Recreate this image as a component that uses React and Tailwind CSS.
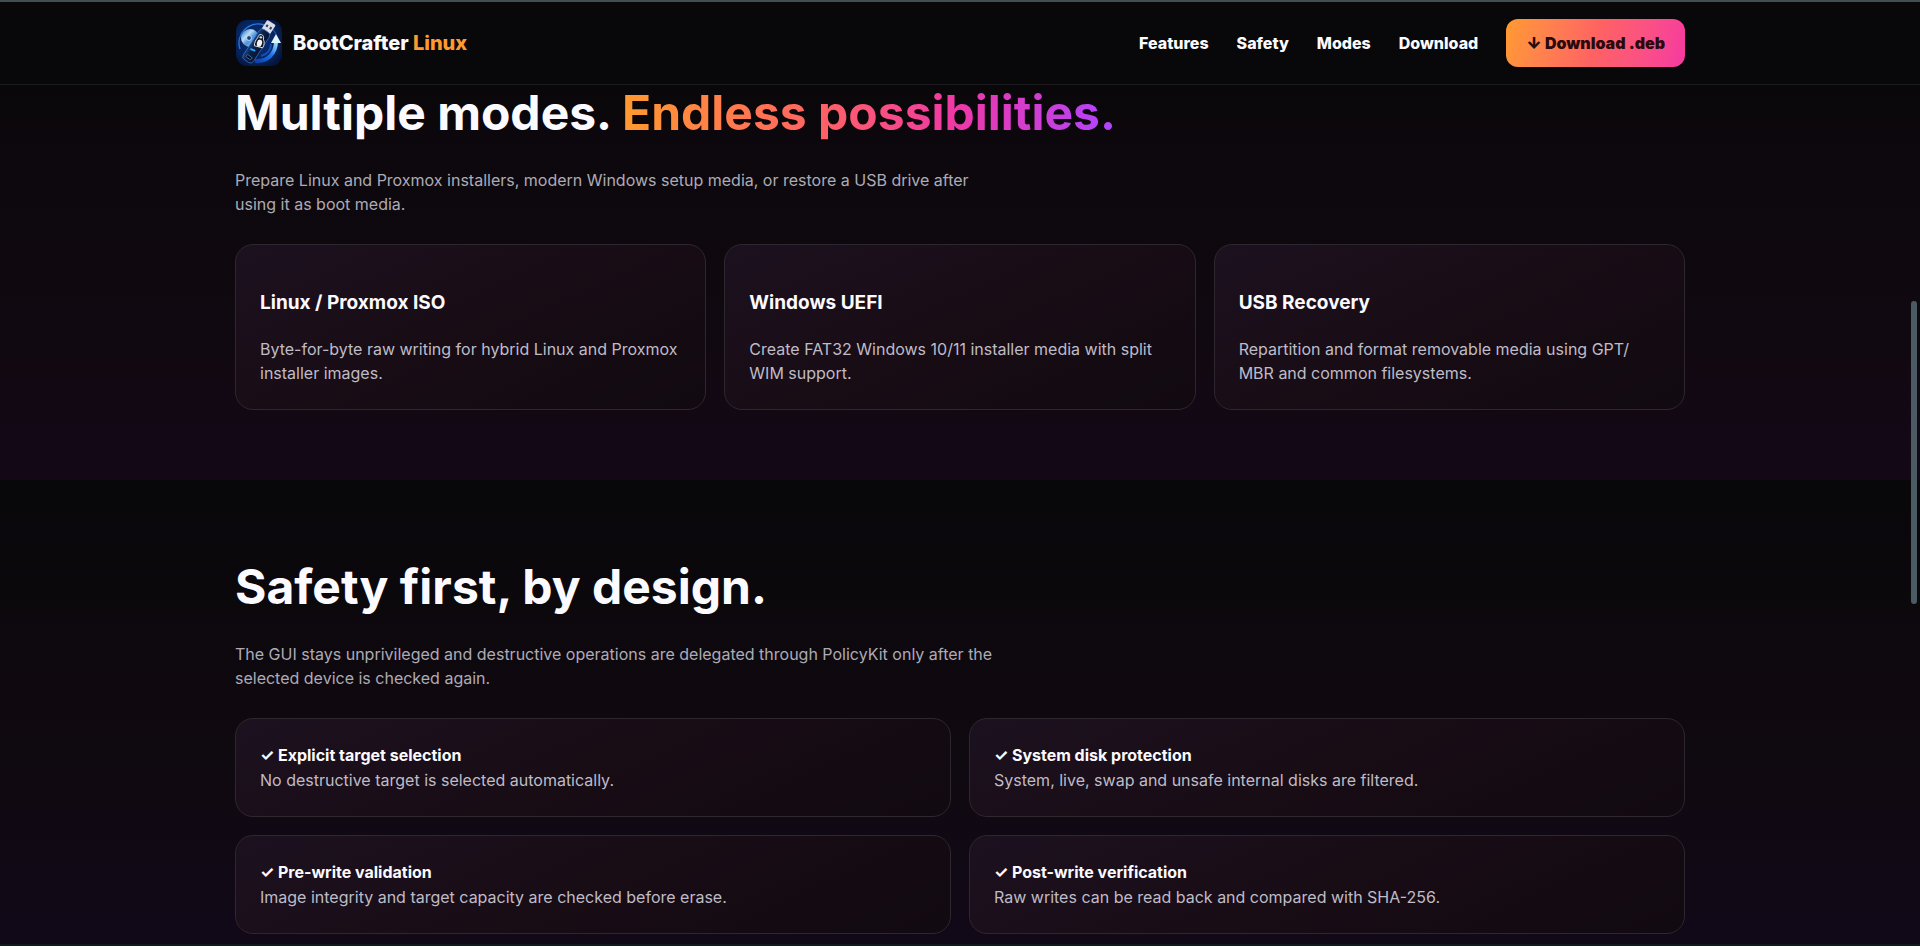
const NAV = ["Features", "Safety", "Modes", "Download"];

const MODES = [
  { title: "Linux / Proxmox ISO", text: "Byte-for-byte raw writing for hybrid Linux and Proxmox installer images." },
  { title: "Windows UEFI", text: "Create FAT32 Windows 10/11 installer media with split WIM support." },
  // zero-width space lets the line break after the slash
  { title: "USB Recovery", text: "Repartition and format removable media using GPT/\u200bMBR and common filesystems." },
];

const CHECKS = [
  { title: "Explicit target selection", text: "No destructive target is selected automatically." },
  { title: "System disk protection", text: "System, live, swap and unsafe internal disks are filtered." },
  { title: "Pre-write validation", text: "Image integrity and target capacity are checked before erase." },
  { title: "Post-write verification", text: "Raw writes can be read back and compared with SHA-256." },
];

function Logo() {
  return (
    <svg viewBox="0 0 48 48" className="size-12 shrink-0" aria-hidden="true">
      <defs>
        <radialGradient id="tile" cx="0.45" cy="0.45" r="0.65">
          <stop offset="0" stopColor="#0a2f7c" />
          <stop offset="0.7" stopColor="#07235c" />
          <stop offset="1" stopColor="#041338" />
        </radialGradient>
        <linearGradient id="arc" x1="0" y1="1" x2="1" y2="0">
          <stop offset="0" stopColor="#0b3fa8" />
          <stop offset="0.55" stopColor="#1b74ea" />
          <stop offset="1" stopColor="#a8e8ff" />
        </linearGradient>
        <linearGradient id="disc" x1="0" y1="0" x2="1" y2="1">
          <stop offset="0" stopColor="#1f62b4" />
          <stop offset="0.35" stopColor="#b9dcf6" />
          <stop offset="0.55" stopColor="#4f93d8" />
          <stop offset="1" stopColor="#c8e4fa" />
        </linearGradient>
        <linearGradient id="stick" x1="0" y1="0" x2="1" y2="0">
          <stop offset="0" stopColor="#16407e" />
          <stop offset="0.4" stopColor="#0a2049" />
          <stop offset="1" stopColor="#071532" />
        </linearGradient>
      </defs>
      <rect x="1" y="1" width="46" height="46" rx="11" fill="url(#tile)" />
      <path d="M5 30A19 19 0 0 1 29 6" fill="none" stroke="#2479dc" strokeWidth="1.4" />
      <path d="M31 6A19 19 0 0 1 41 15" fill="none" stroke="#1654ae" strokeWidth="1.2" />
      <circle cx="15" cy="19" r="9" fill="url(#disc)" />
      <circle cx="14" cy="19" r="2.4" fill="#103d82" stroke="#e2f2ff" strokeWidth="0.8" />
      <path d="M20 42C32 43 41 35 41 22" fill="none" stroke="url(#arc)" strokeWidth="4" />
      <path d="M26 37C33 35 36 30 36 25" fill="none" stroke="#1450b4" strokeWidth="2" />
      <path d="M41 15L46 24H36Z" fill="#dcf5ff" />
      <g transform="rotate(33 22 25)">
        <rect x="17.500" y="-1" width="10" height="11" rx="1.2" fill="#d9dee8" />
        <rect x="19.500" y="3" width="2" height="2.6" fill="#333b4a" />
        <rect x="23.900" y="3" width="2" height="2.6" fill="#333b4a" />
        <rect x="16.500" y="9" width="12" height="36" rx="3.6" fill="url(#stick)" stroke="#3c73c2" strokeWidth="0.7" />
        <rect x="19.500" y="39" width="6" height="2.8" rx="1.2" fill="#040b1c" stroke="#5f92d6" strokeWidth="0.6" />
      </g>
      <rect x="15" y="30" width="5.5" height="2" rx="0.8" fill="#24a8ff" transform="rotate(22 18 31)" />
      {/* Penguin */}
      <g transform="rotate(14 25 23)">
        <path d="M24.500 15.500C27 15.500 27.600 17.500 27.600 19.500C29.500 21.500 30 25 29 28L20.500 28C19.600 25 20.500 21.500 21.800 19.500C21.800 17.500 22.300 15.500 24.500 15.500Z" fill="#0b101c" stroke="#dfe6ef" strokeWidth="0.9" />
        <ellipse cx="24.800" cy="24.300" rx="2.600" ry="3.600" fill="#eef2f7" />
        <ellipse cx="24.700" cy="18.300" rx="1.500" ry="1.100" fill="#d7dde6" />
      </g>
    </svg>
  );
}

function Card({ children }) {
  return (
    <article className="rounded-[18px] border border-[#2c282d] bg-linear-155 from-[#1c111f] via-[#180c15] to-[#110a10] p-6">
      {children}
    </article>
  );
}

export default function App() {
  return (
    <div className="flex min-h-screen flex-col border-t-2 border-b-2 border-t-[#414f53] border-b-[#131a1e] bg-[#08070a] text-base text-[#fbfaff] font-['Inter',sans-serif]">
      {/* Header */}
      <header className="border-b border-[#1c1a1d] bg-[#080709]">
        <div className="mx-auto flex h-[82px] max-w-[1450px] items-center justify-between">
          <a href="#top" className="flex items-center gap-2.5 text-xl font-extrabold">
            <Logo />
            <span>BootCrafter <span className="text-[#ff9a2f]">Linux</span></span>
          </a>
          <nav className="flex items-center gap-7 font-extrabold">
            {NAV.map(item => <a key={item} href={`#${item.toLowerCase()}`}>{item}</a>)}
            <a href="#deb" className="rounded-xl bg-linear-105 from-[#ff9a2f] via-[#ff6262] to-[#f638a0] px-5 py-3 font-black text-[#2a0a0c]">
              ↓ Download .deb
            </a>
          </nav>
        </div>
      </header>

      {/* Modes */}
      <section id="modes" className="bg-linear-to-b from-[#0a070b] via-[#0f090f] to-[#140817] pb-[70px]">
        <div className="mx-auto max-w-[1450px]">
          <h2 className="text-5xl leading-14 font-bold">
            Multiple modes.{" "}
            <span className="bg-[linear-gradient(90deg,#ff9a2f,#ff5f68_42%,#ee38a8_68%,#b044ff)] bg-clip-text text-transparent">
              Endless possibilities.
            </span>
          </h2>
          <p className="mt-[27px] max-w-[760px] text-[#adabb6]">
            Prepare Linux and Proxmox installers, modern Windows setup media, or restore a USB drive after using it as boot media.
          </p>
          <div className="mt-7 grid grid-cols-3 gap-[18px]">
            {MODES.map(mode => (
              <Card key={mode.title}>
                <h3 className="my-[19px] text-[19px] leading-[30px] font-bold">{mode.title}</h3>
                <p className="text-[#bfbcc7]">{mode.text}</p>
              </Card>
            ))}
          </div>
        </div>
      </section>

      {/* Safety */}
      <section id="safety" className="flex-1 bg-linear-to-b from-[#08070a] via-[#0f090f] to-[#120918] pt-[79px] pb-2">
        <div className="mx-auto max-w-[1450px]">
          <h2 className="text-5xl leading-14 font-bold">Safety first, by design.</h2>
          <p className="mt-[27px] max-w-[760px] text-[#adabb6]">
            The GUI stays unprivileged and destructive operations are delegated through PolicyKit only after the selected device is checked again.
          </p>
          <div className="mt-7 grid grid-cols-2 gap-[18px]">
            {CHECKS.map(check => (
              <Card key={check.title}>
                <h3 className="leading-[25px] font-bold">✓ {check.title}</h3>
                <p className="text-[#bfbcc7]">{check.text}</p>
              </Card>
            ))}
          </div>
        </div>
      </section>

      {/* Scroll indicator */}
      <div className="absolute top-[301px] right-[3px] h-[303px] w-1.5 rounded-full bg-[#4a5b63]" />
    </div>
  );
}
